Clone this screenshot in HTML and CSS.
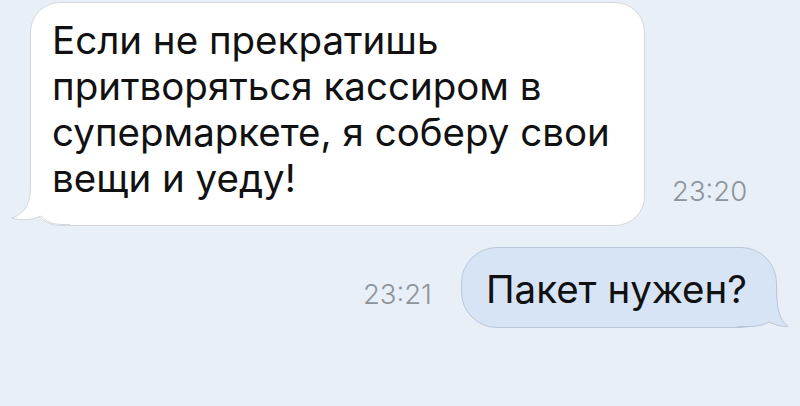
FILE: index.html
```html
<!DOCTYPE html>
<html lang="ru">
<head>
<meta charset="utf-8">
<link rel="stylesheet" href="styles.css">
</head>
<body>
<div class="chat">
  <div class="row row-in">
    <div class="bubble bubble-in">
      <svg class="tail tail-in" viewBox="0 0 60 45" width="60" height="45">
        <path class="tail-fill" d="M20.5,4 C20.5,24 15,32 2,37 C12,40 22,39 31,35 C36,40 42,43.5 52,43.5 L60,43.5 L60,4 Z"/>
        <path class="tail-line" d="M20.5,4 C20.5,24 15,32 2,37 C12,40 22,39 31,35 C36,40 42,43.5 52,43.5 L60,43.5"/>
      </svg>
      <p class="msg">Если не прекратишь<br>притворяться кассиром в<br>супермаркете, я соберу свои<br>вещи и уеду!</p>
    </div>
    <span class="time time-in">23:20</span>
  </div>
  <div class="row row-out">
    <span class="time time-out">23:21</span>
    <div class="bubble bubble-out">
      <svg class="tail tail-out" viewBox="0 0 60 45" width="60" height="45">
        <path class="tail-fill" d="M39.5,4 C39.5,24 42,37 51,43.5 C44,43.5 38,42 32,39 C27,42 20,43.5 10,43.5 L0,43.5 L0,4 Z"/>
        <path class="tail-line" d="M39.5,4 C39.5,24 42,37 51,43.5 C44,43.5 38,42 32,39 C27,42 20,43.5 10,43.5 L0,43.5"/>
      </svg>
      <p class="msg msg-out">Пакет нужен?</p>
    </div>
  </div>
</div>
</body>
</html>
```

FILE: styles.css
```css
html, body {
  margin: 0;
  padding: 0;
}
body {
  width: 800px;
  height: 406px;
  overflow: hidden;
  background: #e9eff6;
  font-family: Inter, "Liberation Sans", Arial, sans-serif;
  color: #111111;
}
.chat {
  display: flex;
  flex-direction: column;
  padding-top: 2px;
  gap: 21px;
}
.row {
  display: flex;
  align-items: flex-end;
}
.row-in {
  padding-left: 30px;
  gap: 27px;
}
.row-out {
  justify-content: flex-end;
  padding-right: 23px;
  gap: 29px;
}
.bubble {
  position: relative;
  box-sizing: border-box;
}
.bubble-in {
  width: 615px;
  height: 224px;
  background: #ffffff;
  border: 1px solid #d3d8de;
  border-radius: 30px;
  padding: 14px 10px 0 21px;
}
.bubble-out {
  height: 81px;
  background: #d6e4f5;
  border: 1px solid #b9c7d8;
  border-radius: 36px;
  padding: 0 29px 0 24px;
  display: flex;
  align-items: center;
}
.msg {
  position: relative;
  z-index: 1;
  margin: 0;
  font-size: 38.5px;
  line-height: 46px;
  letter-spacing: 0;
  white-space: nowrap;
}
.msg-out {
  font-size: 38.5px;
  line-height: 44px;
  padding-top: 2px;
}
.tail {
  position: absolute;
  bottom: -1px;
  overflow: visible;
  z-index: 0;
}
.tail-in {
  left: -21px;
}
.tail-out {
  right: -21px;
}
.bubble-in .tail-fill {
  fill: #ffffff;
}
.bubble-in .tail-line {
  fill: none;
  stroke: #d3d8de;
  stroke-width: 1;
}
.bubble-out .tail-fill {
  fill: #d6e4f5;
}
.bubble-out .tail-line {
  fill: none;
  stroke: #b9c7d8;
  stroke-width: 1;
}
.time {
  font-family: Inter, "Liberation Sans", Arial, sans-serif;
  font-weight: 300;
  font-size: 27.5px;
  line-height: 30px;
  color: #8d939b;
}
.time-in {
  padding-bottom: 20px;
}
.time-out {
  padding-bottom: 19px;
}
```
